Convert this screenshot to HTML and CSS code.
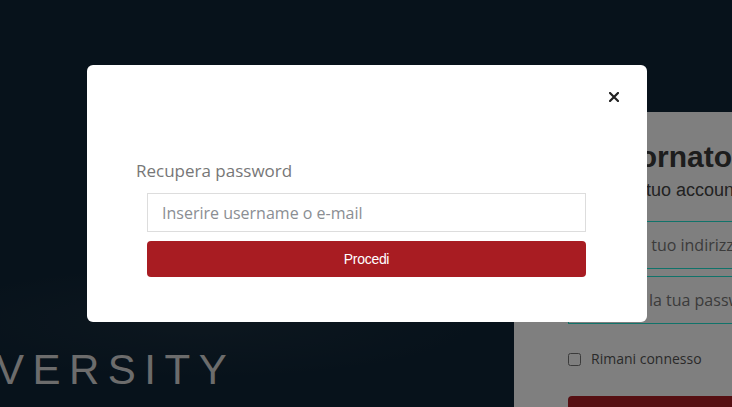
FILE: index.html
```html
<!DOCTYPE html>
<html lang="it">
<head>
  <meta charset="UTF-8">
  <title>Accesso</title>
  <link rel="stylesheet" href="styles.css">
</head>
<body>
  <div class="page">
    <div class="brand">
      <span class="brand-name">VERSITY</span>
    </div>
    <section class="login">
      <h1>Bentornato!</h1>
      <p class="login-sub">Accedi al tuo account</p>
      <input class="login-field" type="text" placeholder="Inserisci il tuo indirizzo email">
      <input class="login-field" type="password" placeholder="Digita qui la tua password">
      <label class="remember"><input type="checkbox"> Rimani connesso</label>
      <button class="login-btn">Accedi</button>
    </section>
  </div>

  <div class="backdrop"></div>

  <div class="modal">
    <div class="modal-header">
      <button class="close" aria-label="Chiudi">
        <svg width="10" height="10" viewBox="0 0 10 10">
          <path d="M1 1L9 9M9 1L1 9" stroke="#222" stroke-width="2.2" stroke-linecap="square"/>
        </svg>
      </button>
    </div>
    <div class="modal-body">
      <div class="modal-label">Recupera password</div>
      <div class="recover">
        <input class="recover-field" type="text" placeholder="Inserire username o e-mail">
        <button class="recover-btn">Procedi</button>
      </div>
    </div>
  </div>
</body>
</html>
```

FILE: styles.css
```css
html, body {
  margin: 0;
  padding: 0;
  height: 100%;
  overflow: hidden;
  font-family: "Open Sans", Arial, sans-serif;
}
body {
  background: radial-gradient(ellipse 300px 60px at 200px 322px, #1a2e3e, rgba(14,36,54,0) 100%), #0e2436;
}
.page {
  display: flex;
  height: 407px;
}
.brand {
  flex: 0 0 514px;
  display: flex;
  flex-direction: column;
  justify-content: flex-end;
  overflow: hidden;
}
.brand-name {
  font-family: "Liberation Sans", Arial, sans-serif;
  font-size: 42px;
  line-height: 42px;
  letter-spacing: 8.5px;
  color: #d8d8d8;
  margin: 0 0 16px -4px;
  white-space: nowrap;
}
.login {
  flex: 1;
  margin-top: 112px;
  background: #fff;
  padding-left: 54px;
  overflow: hidden;
  white-space: nowrap;
  display: flex;
  flex-direction: column;
  align-items: flex-start;
}
.login > * {
  flex-shrink: 0;
}
.login h1 {
  font-family: "Liberation Sans", Arial, sans-serif;
  font-size: 30px;
  line-height: 34px;
  color: #3a3a3a;
  margin: 28px 0 0 4px;
}
.login-sub {
  font-family: "Liberation Sans", Arial, sans-serif;
  font-size: 18px;
  line-height: 22px;
  color: #444;
  margin: 5px 0 0 0;
}
.login-field {
  box-sizing: border-box;
  width: 400px;
  height: 48px;
  border: 1px solid #20e6d4;
  padding: 0 5px;
  font-family: "Open Sans", sans-serif;
  font-size: 16px;
  margin: 0;
}
.login-field::placeholder {
  color: #777;
}
.login-sub + .login-field {
  margin-top: 20px;
}
.login-field + .login-field {
  margin-top: 7px;
}
.remember {
  display: flex;
  align-items: center;
  gap: 10px;
  margin-top: 25px;
  font-size: 14px;
  line-height: 20px;
  color: #555;
}
.remember input {
  margin: 0;
  width: 13px;
  height: 13px;
}
.login-btn {
  margin-top: 27px;
  width: 400px;
  height: 40px;
  border: 0;
  border-radius: 4px;
  background: #ac1e24;
  color: #fff;
}
.backdrop {
  position: fixed;
  inset: 0;
  background: rgba(0,0,0,0.5);
}
.modal {
  position: absolute;
  top: 65px;
  left: 87px;
  width: 560px;
  height: 257px;
  box-sizing: border-box;
  background: #fff;
  border-radius: 6px;
}
.modal-header {
  display: flex;
  justify-content: flex-end;
  padding: 27px 28px 0 0;
}
.close {
  border: 0;
  background: none;
  padding: 0;
  width: 10px;
  height: 10px;
  display: block;
  cursor: pointer;
}
.close svg {
  display: block;
}
.modal-body {
  margin-top: 57px;
}
.modal-label {
  padding-left: 49px;
  font-size: 17px;
  line-height: 24px;
  color: #777;
}
.recover {
  padding: 0 61px 0 60px;
  margin-top: 10px;
  display: flex;
  flex-direction: column;
  gap: 9px;
}
.recover-field {
  box-sizing: border-box;
  height: 39px;
  border: 1px solid #ddd;
  padding: 0 14px;
  font-family: "Open Sans", sans-serif;
  font-size: 16px;
  margin: 0;
}
.recover-field::placeholder {
  color: #8a8e93;
}
.recover-btn {
  height: 36px;
  border: 0;
  border-radius: 4px;
  background: #a81c22;
  color: #fff;
  font-family: "Liberation Sans", Arial, sans-serif;
  font-size: 14px;
  letter-spacing: -0.3px;
  cursor: pointer;
}
```
